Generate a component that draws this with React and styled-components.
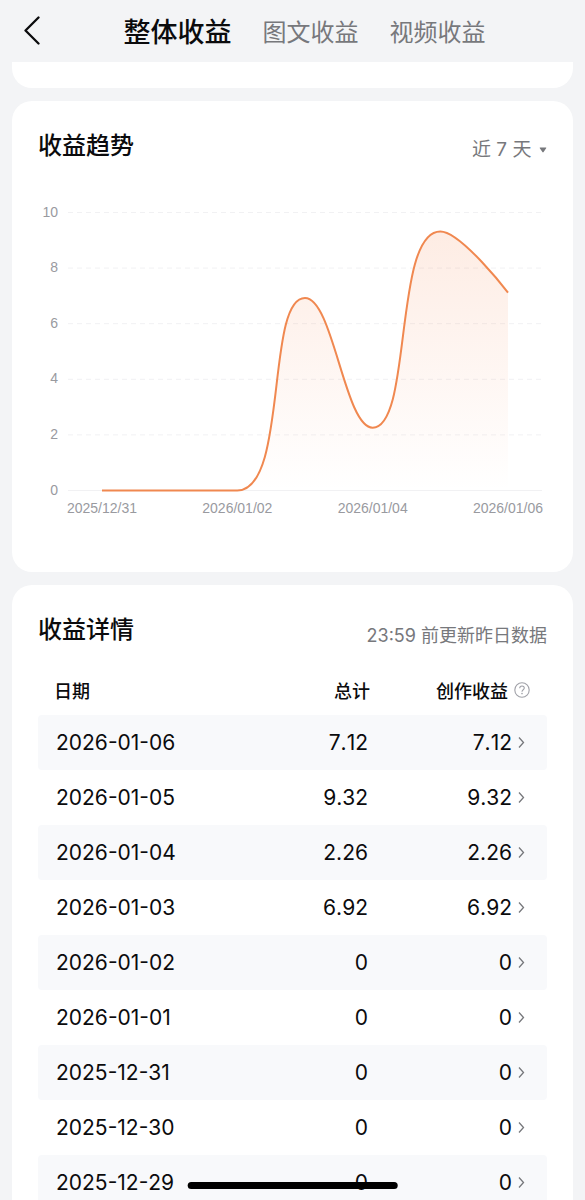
import React, { useState } from 'react';
import styled, { createGlobalStyle, css } from 'styled-components';

const GlobalStyle = createGlobalStyle`
  * {
    box-sizing: border-box;
  }
  body {
    margin: 0;
    background: #f3f4f6;
    color: #0b0b0d;
    font-family: Inter, 'Noto Sans CJK SC', sans-serif;
  }
  button,
  select {
    margin: 0;
    padding: 0;
    border: 0;
    background: none;
    color: inherit;
    font: inherit;
    cursor: pointer;
  }
`;

const Screen = styled.div`
  display: flex;
  flex-direction: column;
  height: 100vh;
`;

const Header = styled.header`
  display: flex;
  flex: none;
  align-items: center;
  height: 62px;
  padding: 0 24px;
`;

const BackButton = styled.button`
  display: flex;
  width: 24px;
  height: 32px;
`;

const Tabs = styled.nav`
  display: flex;
  flex: 1;
  align-items: center;
  justify-content: center;
  gap: 31px;
  padding-top: 4px;
`;

const Tab = styled.button`
  color: #77787c;
  font-size: 24px;
  line-height: 36px;
  white-space: nowrap;
  ${props =>
    props.$active &&
    css`
      color: #0b0b0d;
      font-size: 27px;
      font-weight: 500;
    `}
`;

const Content = styled.main`
  display: flex;
  flex: 1;
  flex-direction: column;
  gap: 13px;
  min-height: 0;
  padding: 0 12px;
  overflow-y: auto;
  scrollbar-width: none;
`;

const Card = styled.section`
  flex: none;
  padding: 28px 26px 51px;
  border-radius: 20px;
  background: #fff;
`;

const CardEnd = styled.div`
  flex: none;
  height: 26px;
  border-radius: 0 0 20px 20px;
  background: #fff;
`;

const CardHead = styled.div`
  display: flex;
  align-items: flex-end;
  justify-content: space-between;
`;

const CardTitle = styled.h2`
  margin: 0;
  font-size: 24px;
  font-weight: 500;
  line-height: 34px;
`;

const Note = styled.span`
  color: #77787c;
  font-size: 18px;
  line-height: 22px;
`;

const RangePicker = styled.label`
  display: flex;
  align-items: center;
  gap: 7px;
  color: #77787c;
  font-size: 19px;
  line-height: 26px;
`;

const RangeSelect = styled.select`
  appearance: none;
  outline: none;
`;

const ChartSvg = styled.svg`
  display: block;
  width: 100%;
  margin-top: 38px;
  font-family: 'Liberation Sans', Arial, sans-serif;
  font-size: 14px;
`;

const Table = styled.table`
  width: 100%;
  margin-top: 18px;
  border-collapse: collapse;
  table-layout: fixed;
`;

const HeadCell = styled.th`
  width: ${props => props.$width};
  height: 50px;
  padding: ${props => props.$padding || '0'};
  font-size: 18px;
  font-weight: 500;
  text-align: ${props => props.$align || 'left'};
`;

const Row = styled.tr`
  &:nth-child(odd) {
    background: #f8f9fb;
  }
`;

const Cell = styled.td`
  height: 55px;
  padding: ${props => props.$padding};
  font-size: 21px;
  font-kerning: none;
  text-align: ${props => props.$align || 'left'};
  &:first-child {
    border-radius: 4px 0 0 4px;
  }
  &:last-child {
    border-radius: 0 4px 4px 0;
  }
`;

const Inline = styled.span`
  display: flex;
  align-items: center;
  justify-content: flex-end;
  gap: 6px;
`;

const DetailButton = styled.button`
  display: flex;
  align-items: center;
  gap: 2px;
  margin-left: auto;
`;

const IconButton = styled.button`
  display: flex;
`;

const HomeIndicator = styled.div`
  position: fixed;
  bottom: 11px;
  left: 50%;
  width: 36%;
  height: 7px;
  border-radius: 4px;
  background: #000;
  transform: translateX(-50%);
`;

const tabs = ['整体收益', '图文收益', '视频收益'];

const trend = [0, 0, 0, 6.92, 2.26, 9.32, 7.12];
const xLabels = ['2025/12/31', '2026/01/02', '2026/01/04', '2026/01/06'];
const yLabels = [0, 2, 4, 6, 8, 10];

const details = [
  { date: '2026-01-06', total: '7.12', creation: '7.12' },
  { date: '2026-01-05', total: '9.32', creation: '9.32' },
  { date: '2026-01-04', total: '2.26', creation: '2.26' },
  { date: '2026-01-03', total: '6.92', creation: '6.92' },
  { date: '2026-01-02', total: '0', creation: '0' },
  { date: '2026-01-01', total: '0', creation: '0' },
  { date: '2025-12-31', total: '0', creation: '0' },
  { date: '2025-12-30', total: '0', creation: '0' },
  { date: '2025-12-29', total: '0', creation: '0' }
];

const toX = index => 64 + (index * 406) / 6;
const toY = value => 289.5 - value * 27.8;

const clamp = (value, a, b) =>
  Math.max(Math.min(value, Math.max(a, b)), Math.min(a, b));

// cubic segments whose control points never leave the range of their segment
const smoothPath = points => {
  let path = `M${points[0].join(' ')}`;
  let out = points[0];
  for (let i = 1; i < points.length; i += 1) {
    const prev = points[i - 1];
    const cur = points[i];
    const next = points[i + 1];
    let cpIn = cur;
    let cpOut = cur;
    if (next) {
      const lenPrev = Math.hypot(cur[0] - prev[0], cur[1] - prev[1]);
      const lenNext = Math.hypot(next[0] - cur[0], next[1] - cur[1]);
      const ratio = lenNext / (lenNext + lenPrev);
      cpOut = cur.map((c, k) =>
        clamp(c + (next[k] - prev[k]) * 0.5 * ratio, c, next[k])
      );
      cpIn = cur.map((c, k) =>
        clamp(c - ((cpOut[k] - c) * lenPrev) / lenNext, c, prev[k])
      );
      cpOut = cur.map((c, k) => c + ((c - cpIn[k]) * lenNext) / lenPrev);
    }
    path += `C${out.join(' ')} ${cpIn.join(' ')} ${cur.join(' ')}`;
    out = cpOut;
  }
  return path;
};

const TrendChart = () => {
  const line = smoothPath(trend.map((value, i) => [toX(i), toY(value)]));
  return (
    <ChartSvg viewBox="0 0 509 320" role="img" aria-label="收益趋势">
      <defs>
        <linearGradient id="area" x1="0" y1="0" x2="0" y2="1">
          <stop offset="0" stopColor="#f5783c" stopOpacity="0.14" />
          <stop offset="1" stopColor="#f5783c" stopOpacity="0" />
        </linearGradient>
      </defs>
      {yLabels.map(value => (
        <g key={value}>
          <line
            x1="30"
            x2="504"
            y1={toY(value)}
            y2={toY(value)}
            stroke="#f1f1f3"
            strokeDasharray={value ? '5 4' : undefined}
          />
          <text x="20" y={toY(value) + 4} textAnchor="end" fill="#999a9f">
            {value}
          </text>
        </g>
      ))}
      {xLabels.map((label, i) => (
        <text
          key={label}
          x={toX(i * 2)}
          y="312"
          textAnchor="middle"
          fill="#999a9f"
        >
          {label}
        </text>
      ))}
      <path d={`${line}V${toY(0)}H${toX(0)}Z`} fill="url(#area)" />
      <path d={line} fill="none" stroke="#f08850" strokeWidth="2" />
    </ChartSvg>
  );
};

const BackIcon = () => (
  <svg width="24" height="32" viewBox="0 0 24 32" fill="none">
    <path
      d="M14.500 2.500L1.500 15.500L14.500 28.500"
      stroke="#0b0b0d"
      strokeWidth="2.300"
      strokeLinecap="round"
      strokeLinejoin="round"
    />
  </svg>
);

const CaretIcon = () => (
  <svg width="8" height="6" viewBox="0 0 9 7">
    <path
      d="M1.200 .5H7.800Q8.900 .6 8.200 1.500L5.200 5.900Q4.500 6.700 3.800 5.900L.8 1.500Q.1 .6 1.200 .5Z"
      fill="#77787c"
    />
  </svg>
);

const HelpIcon = () => (
  <svg width="16" height="16" viewBox="0 0 16 16" fill="none">
    <circle cx="8" cy="8" r="7.200" stroke="#a0a1a8" strokeWidth="1.100" />
    <path
      d="M5.700 6.300C5.700 3.200 10.300 3.200 10.300 6.100C10.300 7.700 8 7.800 8 9.700"
      stroke="#a0a1a8"
      strokeWidth="1.100"
    />
    <circle cx="8" cy="11.600" r=".8" fill="#a0a1a8" />
  </svg>
);

const ChevronIcon = () => (
  <svg width="16" height="16" viewBox="0 0 16 16" fill="none">
    <path d="M5 2.500L9.500 7.500L5 12.500" stroke="#77787c" strokeWidth="1.300" />
  </svg>
);

const App = () => {
  const [active, setActive] = useState(tabs[0]);
  return (
    <Screen>
      <GlobalStyle />
      <Header>
        <BackButton type="button" aria-label="返回">
          <BackIcon />
        </BackButton>
        <Tabs>
          {tabs.map(tab => (
            <Tab
              key={tab}
              type="button"
              $active={tab === active}
              onClick={() => setActive(tab)}
            >
              {tab}
            </Tab>
          ))}
        </Tabs>
      </Header>
      <Content>
        <CardEnd />
        <Card>
          <CardHead>
            <CardTitle>收益趋势</CardTitle>
            <RangePicker>
              <RangeSelect aria-label="时间范围">
                <option>近 7 天</option>
              </RangeSelect>
              <CaretIcon />
            </RangePicker>
          </CardHead>
          <TrendChart />
        </Card>
        <Card>
          <CardHead>
            <CardTitle>收益详情</CardTitle>
            <Note>23:59 前更新昨日数据</Note>
          </CardHead>
          <Table>
            <thead>
              <tr>
                <HeadCell $padding="0 0 0 16px">日期</HeadCell>
                <HeadCell $width="130px" $align="right">
                  总计
                </HeadCell>
                <HeadCell $width="177px" $padding="0 17px 0 0" $align="right">
                  <Inline>
                    创作收益
                    <IconButton type="button" aria-label="创作收益说明">
                      <HelpIcon />
                    </IconButton>
                  </Inline>
                </HeadCell>
              </tr>
            </thead>
            <tbody>
              {details.map(({ date, total, creation }) => (
                <Row key={date}>
                  <Cell $padding="0 0 0 18px">{date}</Cell>
                  <Cell $padding="0 2px 0 0" $align="right">
                    {total}
                  </Cell>
                  <Cell $padding="0 17px 0 0" $align="right">
                    <DetailButton type="button">
                      {creation}
                      <ChevronIcon />
                    </DetailButton>
                  </Cell>
                </Row>
              ))}
            </tbody>
          </Table>
        </Card>
      </Content>
      <HomeIndicator />
    </Screen>
  );
};

export default App;
